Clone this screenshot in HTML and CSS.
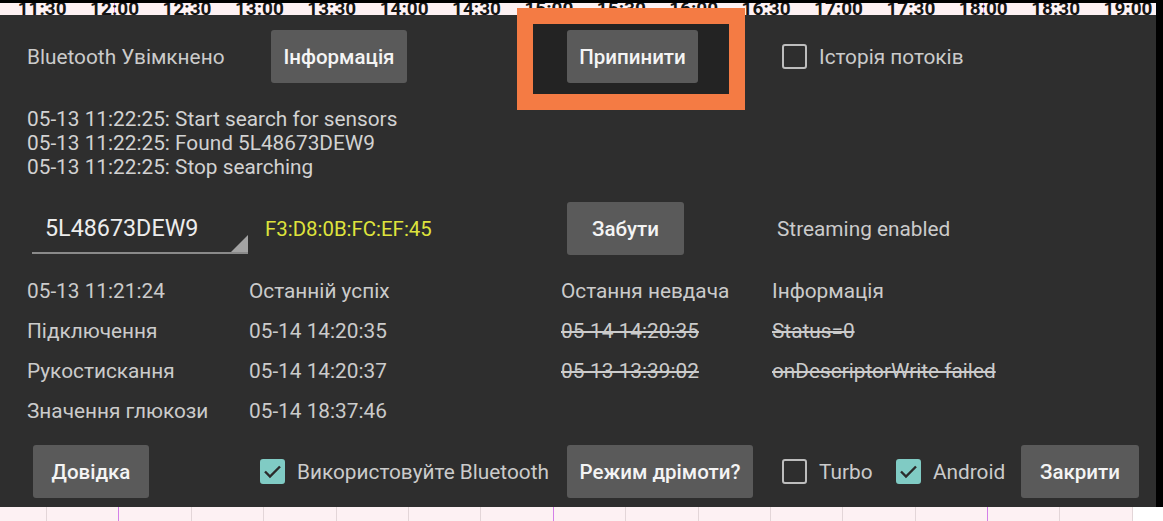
FILE: index.html
```html
<!DOCTYPE html>
<html lang="uk">
<head>
    <meta charset="UTF-8">
    <meta name="viewport" content="width=device-width, initial-scale=1.0">
    <title>Bluetooth</title>
    <link rel="stylesheet" href="styles.css">
</head>
<body>
    <div class="screen">
        <!-- шкала часу графіка -->
        <div class="axis">
            <span>11:30</span><span class="mark">12:00</span><span>12:30</span><span>13:00</span>
            <span>13:30</span><span>14:00</span><span>14:30</span><span>15:00</span>
            <span>15:30</span><span>16:00</span><span>16:30</span><span>17:00</span>
            <span>17:30</span><span class="mark">18:00</span><span>18:30</span><span>19:00</span>
        </div>

        <div class="panel">
            <div class="highlight"></div>

            <div class="row top-row">
                <span class="text status">Bluetooth Увімкнено</span>
                <button class="btn btn-info">Інформація</button>
                <button class="btn btn-stop">Припинити</button>
                <label class="check check-history"><span class="box"></span>Історія потоків</label>
            </div>

            <div class="log">
                <div>05-13 11:22:25: Start search for sensors</div>
                <div>05-13 11:22:25: Found 5L48673DEW9</div>
                <div>05-13 11:22:25: Stop searching</div>
            </div>

            <div class="row sensor-row">
                <div class="spinner">5L48673DEW9</div>
                <span class="mac">F3:D8:0B:FC:EF:45</span>
                <button class="btn btn-forget">Забути</button>
                <span class="text streaming">Streaming enabled</span>
            </div>

            <div class="table">
                <span>05-13 11:21:24</span><span>Останній успіх</span><span>Остання невдача</span><span>Інформація</span>
                <span>Підключення</span><span>05-14 14:20:35</span><span class="old">05-14 14:20:35</span><span class="old">Status=0</span>
                <span>Рукостискання</span><span>05-14 14:20:37</span><span class="old">05-13 13:39:02</span><span class="old">onDescriptorWrite failed</span>
                <span>Значення глюкози</span><span>05-14 18:37:46</span><span></span><span></span>
            </div>

            <div class="row bottom-row">
                <button class="btn btn-help">Довідка</button>
                <label class="check check-bt"><span class="box on"></span>Використовуйте Bluetooth</label>
                <button class="btn btn-doze">Режим дрімоти?</button>
                <label class="check check-turbo"><span class="box"></span>Turbo</label>
                <label class="check check-android"><span class="box on"></span>Android</label>
                <button class="btn btn-close">Закрити</button>
            </div>
        </div>

        <div class="grid-strip">
            <span></span><span class="mark"></span><span></span><span></span><span></span><span></span>
            <span></span><span class="mark"></span><span></span><span></span><span></span><span></span>
            <span></span><span class="mark"></span><span></span><span class="last"></span>
        </div>
    </div>
</body>
</html>
```

FILE: styles.css
```css
body {
    margin: 0;
    background-color: #000;
    font-family: Roboto, "Noto Sans", sans-serif;
    overflow: hidden;
}
.screen {
    width: 1156px;
}

/* шкала часу */
.axis {
    height: 12px;
    border-top: 3px solid #000;
    background: #fdf1f3;
    display: flex;
    padding-left: 6px;
    overflow: hidden;
}
.axis span {
    flex: 0 0 72.4px;
    text-align: center;
    font-weight: bold;
    font-size: 19px;
    line-height: 12px;
    color: #151515;
}
.axis .mark {
    background: linear-gradient(#d58be8, #d58be8) no-repeat center / 1px 100%;
}

.panel {
    position: relative;
    background-color: #2e2e2e;
    padding: 15px 0 9px 27px;
    color: #cbcbcb;
    font-size: 20.8px;
}
.highlight {
    position: absolute;
    left: 517px;
    top: -7px;
    width: 196px;
    height: 70px;
    border: 16px solid #f47b44;
    background-color: #232323;
}

.row {
    display: flex;
    align-items: center;
    height: 53px;
}

.btn {
    position: relative;
    height: 53px;
    padding: 0;
    border: none;
    border-radius: 3px;
    background-color: #5a5a5a;
    color: #f4f4f4;
    font-family: inherit;
    font-size: 20.5px;
    font-weight: 500;
}

.check {
    display: flex;
    align-items: center;
    gap: 12px;
    color: #cbcbcb;
}
.box {
    box-sizing: border-box;
    width: 25px;
    height: 25px;
    border: 2px solid #bdbdbd;
    border-radius: 3px;
}
.box.on {
    border-color: #80cbc4;
    background: #80cbc4 url("data:image/svg+xml;utf8,<svg xmlns='http://www.w3.org/2000/svg' viewBox='0 0 25 25'><path d='M5 12.5l5 5 10-10' fill='none' stroke='%232b2b2b' stroke-width='2.4'/></svg>") no-repeat center / 25px 25px;
}

.status { width: 244px; }
.btn-info { width: 136px; }
.btn-stop { width: 131px; margin-left: 160px; }
.check-history { margin-left: 84px; }

.log {
    margin-top: 24px;
    line-height: 24px;
    color: #d2d2d2;
}

.sensor-row {
    margin-top: 23px;
}
.spinner {
    position: relative;
    box-sizing: border-box;
    width: 216px;
    height: 48px;
    margin: 2px 0 0 5px;
    padding: 8px 0 0 13px;
    border-bottom: 2px solid #8a8a8a;
    color: #ececec;
    font-size: 23.3px;
}
.spinner::after {
    content: "";
    position: absolute;
    right: 0;
    bottom: 0;
    border-left: 17px solid transparent;
    border-bottom: 17px solid #a3a3a3;
}
.mac {
    width: 302px;
    margin-left: 17px;
    color: #dfe33c;
    font-size: 20.4px;
}
.btn-forget { width: 117px; }
.streaming { margin-left: 93px; }

.table {
    margin-top: 16px;
    display: grid;
    grid-template-columns: 222px 312px 211px auto;
    grid-auto-rows: 40px;
    align-items: center;
}
.old {
    text-decoration: line-through;
}

.bottom-row {
    margin-top: 14px;
}
.btn-help { width: 116px; margin-left: 6px; }
.check-bt { width: 307px; margin-left: 111px; }
.btn-doze { width: 186px; }
.check-turbo { width: 114px; margin-left: 29px; }
.check-android { width: 125px; }
.btn-close { width: 118px; }

/* сітка графіка знизу */
.grid-strip {
    height: 14px;
    background: #fdf1f3;
    display: flex;
    padding-left: 46px;
}
.grid-strip span {
    flex: 0 0 72.4px;
    box-sizing: border-box;
    border-left: 1px solid #e3d6d8;
}
.grid-strip .mark {
    border-left-color: #d47fe8;
}
.grid-strip .last {
    background: #fff;
}
```
